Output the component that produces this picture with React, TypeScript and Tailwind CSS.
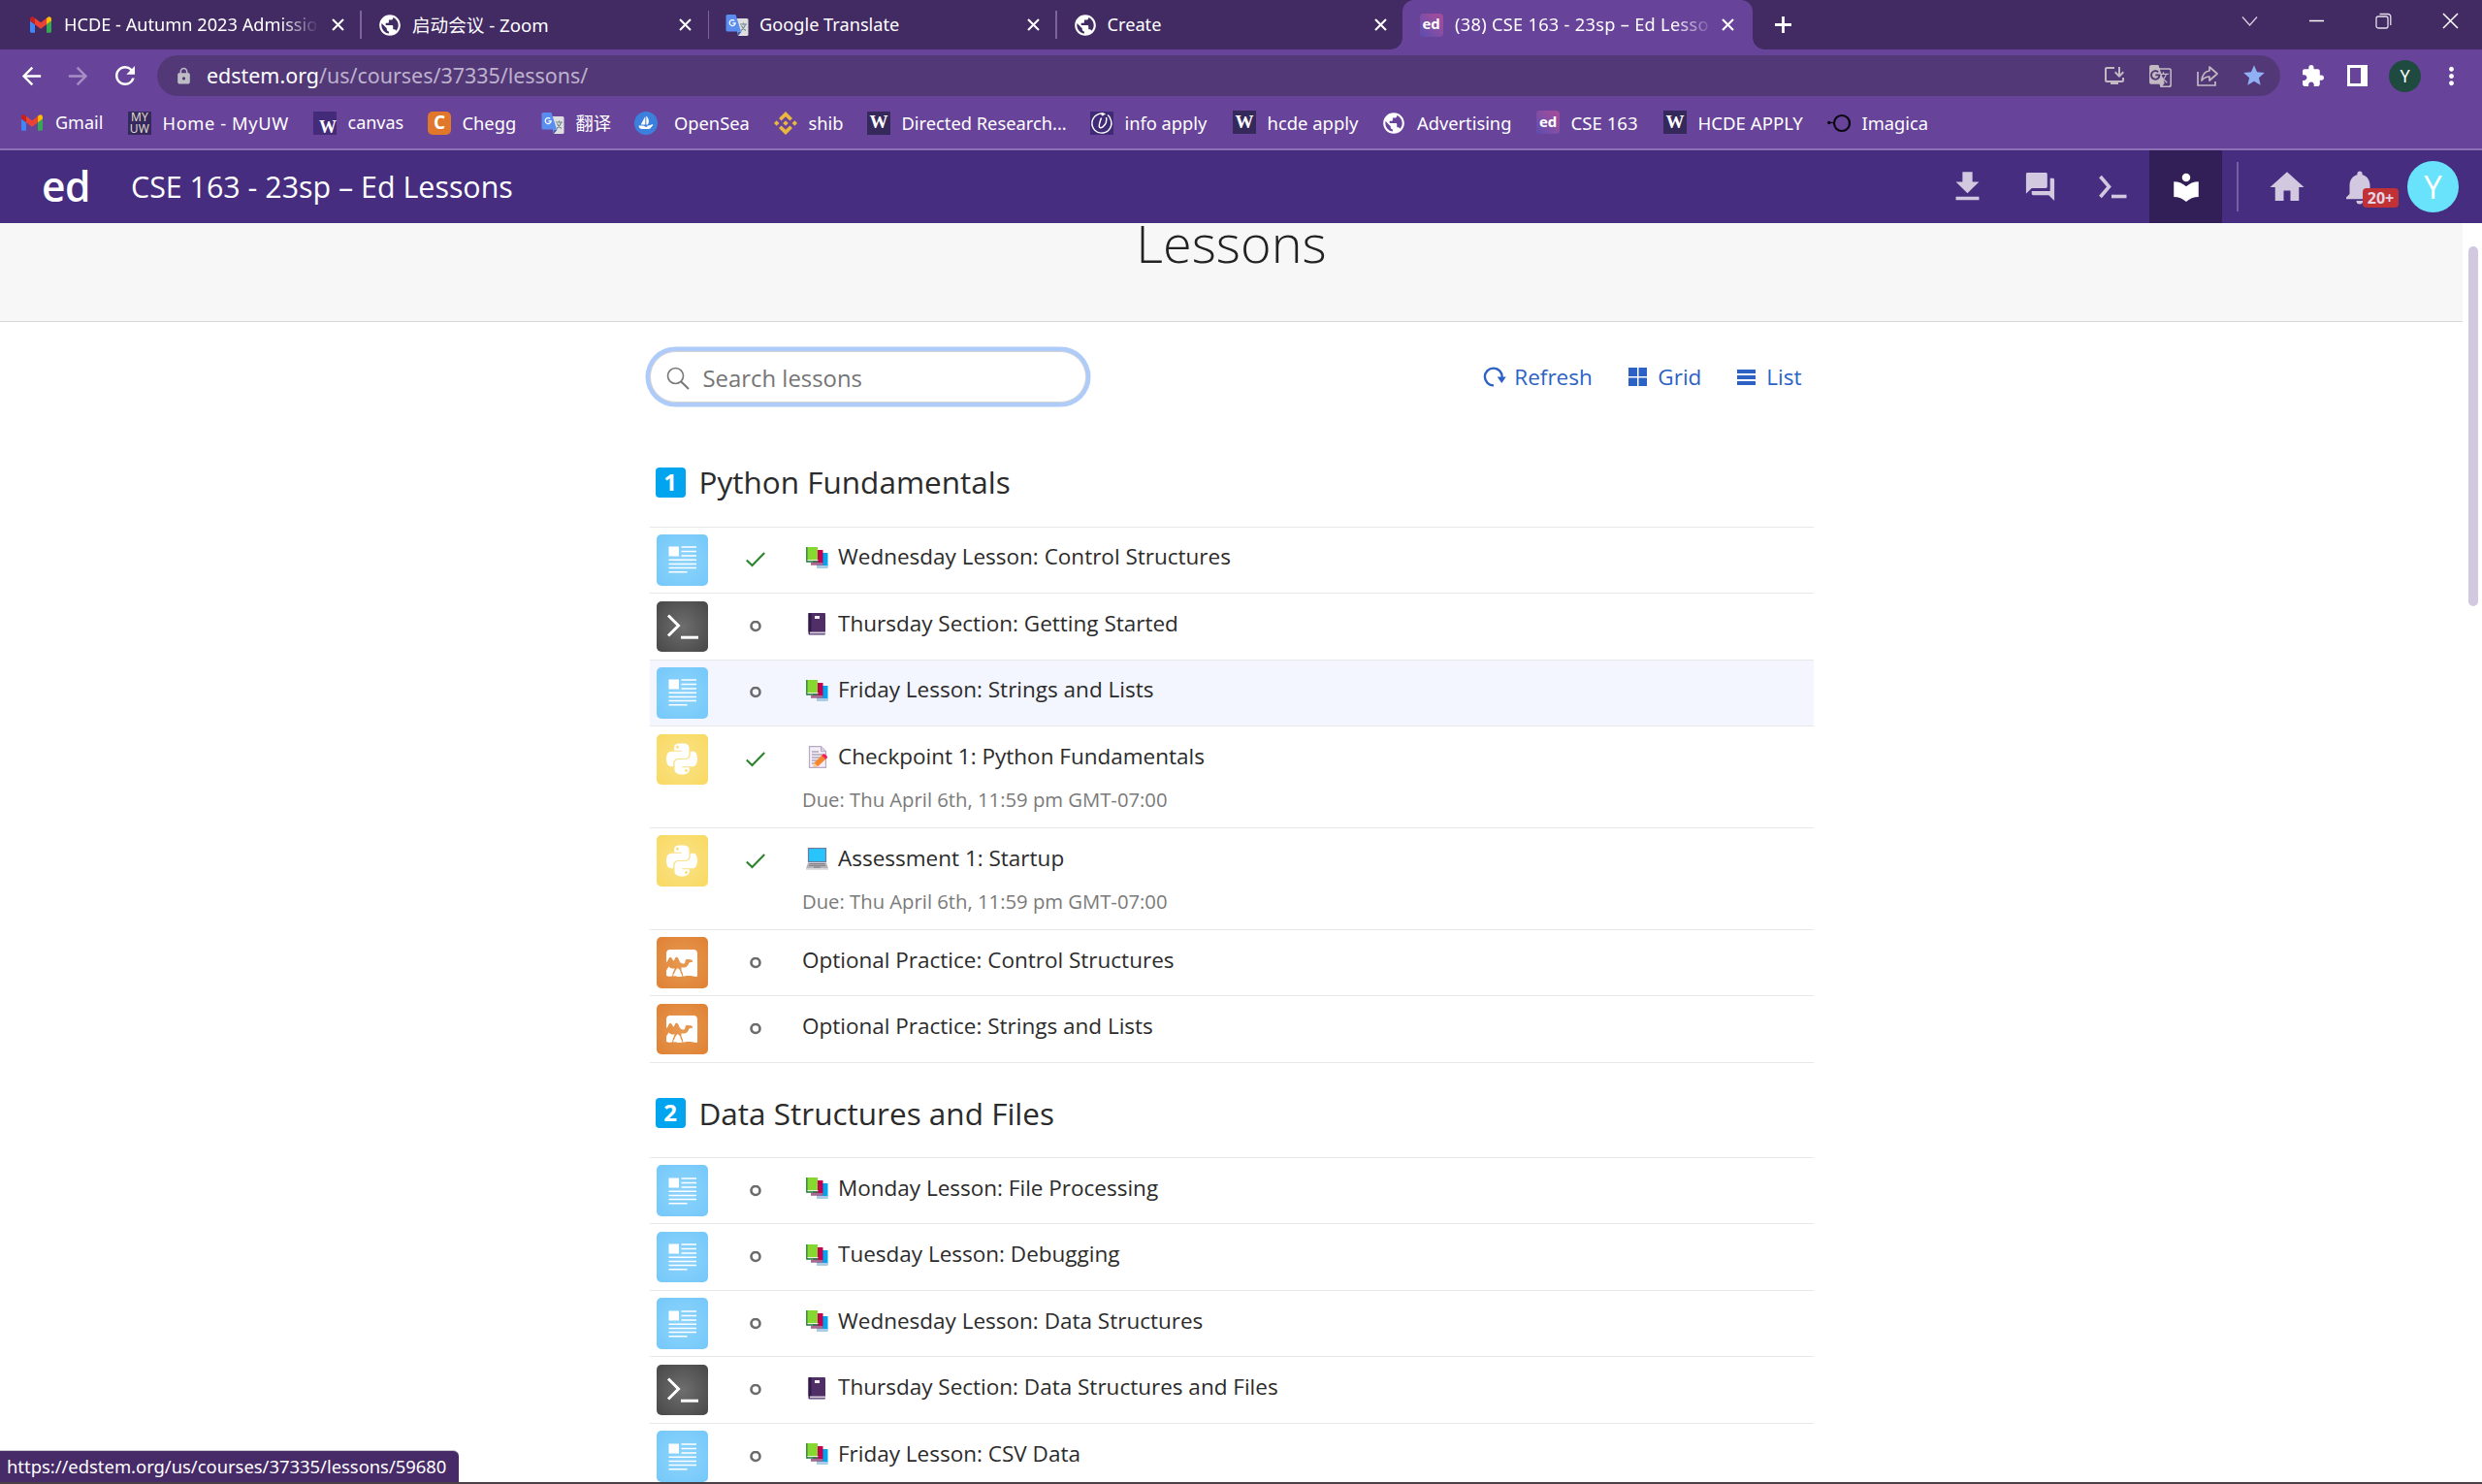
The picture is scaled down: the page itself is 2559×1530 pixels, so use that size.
import React, { type ReactNode } from "react";
import {
  MdArrowBack,
  MdArrowForward,
  MdExtension,
  MdFileDownload,
  MdForum,
  MdGTranslate,
  MdHome,
  MdInstallDesktop,
  MdLocalLibrary,
  MdLock,
  MdMoreVert,
  MdNotifications,
  MdPublic,
  MdRefresh,
  MdStar,
} from "react-icons/md";
import { FaPython } from "react-icons/fa";
import { SiOcaml } from "react-icons/si";

/* ---------- favicons ---------- */

const GmailIcon = () => (
  <svg className="h-[17px] w-[22px]" viewBox="52 42 88 66">
    <path fill="#4285f4" d="M58 108h14V74L52 59v43c0 3.32 2.69 6 6 6" />
    <path fill="#34a853" d="M120 108h14c3.32 0 6-2.69 6-6V59l-20 15" />
    <path fill="#fbbc04" d="M120 48v26l20-15v-8c0-7.42-8.47-11.65-14.4-7.2" />
    <path fill="#ea4335" d="M72 74V48l24 18 24-18v26L96 92" />
    <path fill="#c5221f" d="M52 51v8l20 15V48l-5.6-4.2c-5.94-4.45-14.4-.22-14.4 7.2" />
  </svg>
);

const GlobeIcon = () => <MdPublic className="-m-[2px] size-[26px] shrink-0 text-white" />;

const TranslateIcon = () => (
  <svg className="size-[24px]" viewBox="0 0 24 24">
    <path d="M10 5h12a1.500 1.500 0 0 1 1.500 1.500V21.500A1.500 1.500 0 0 1 22 23h-9z" fill="#dfdfdf" />
    <path d="M12.500 18.500h4.200L13 23z" fill="#3a62b8" />
    <path d="M2 1h8.500l5.500 17.500H2A1.500 1.500 0 0 1 .5 17V2.500A1.500 1.500 0 0 1 2 1z" fill="#5a8df0" />
    <path d="M15 11h7M18.500 9.500V11M20.500 11c-.5 3-2.500 5-4.500 6.500M16.500 12.500c1 2.500 2.500 4 4.500 5" stroke="#6f8590" strokeWidth="1.100" fill="none" />
    <path d="M9.300 7.400A3 3 0 1 0 10.200 9.800H7.400" stroke="#fff" strokeWidth="1.300" fill="none" />
  </svg>
);

const EdIcon = () => (
  <span className="flex size-[24px] items-center justify-center rounded-[4px] bg-linear-to-tr from-[#5b4cb0] to-[#ab4a98] pb-[2px] font-['Open_Sans'] text-[15px] font-bold leading-none tracking-[-0.3px] text-white">
    ed
  </span>
);

const WIcon = () => (
  <span className="flex size-[24px] items-center justify-center bg-[#35285a] pb-[2px] font-['Liberation_Serif'] text-[19px] font-bold leading-none text-white">
    W
  </span>
);

const MyUwIcon = () => (
  <span className="flex size-[24px] flex-col items-center justify-center bg-[#35285f] font-['Open_Sans'] text-[12px] leading-[12px] tracking-[0.3px] text-[#e8e0cc]">
    <span>MY</span>
    <span>UW</span>
  </span>
);

const CanvasIcon = () => (
  <span className="flex size-[24px] items-end justify-end bg-[#432b7a] font-['Liberation_Serif'] text-[18px] font-bold leading-[15px] text-white">
    W
  </span>
);

const CheggIcon = () => (
  <span className="flex size-[24px] items-center justify-center rounded-[5px] bg-[#e0772b] pb-px font-['Open_Sans'] text-[19px] font-bold leading-none text-white">
    C
  </span>
);

const OpenSeaIcon = () => (
  <svg className="size-[24px]" viewBox="0 0 24 24">
    <circle cx="12" cy="12" r="12" fill="#3b80dc" />
    <path d="M11.300 5v8.500H6.700z" fill="#fff" />
    <path d="M12.300 4.500c2.600 2.600 3.500 6 1.600 9h-1.600z" fill="#fff" />
    <path d="M4.500 14.500h5l2 1.300h1.800v-1.300h1.800l4-1.400v1.500c-1.500.6-2 3.400-4.400 3.400H8c-2 0-3.500-1.500-3.500-3.500z" fill="#fff" />
  </svg>
);

const BinanceIcon = () => (
  <svg className="size-[24px]" viewBox="0 0 24 24" fill="#eab83f">
    <path d="M12 0l7 7-2.600 2.600L12 5.200 7.600 9.600 5 7z" />
    <path d="M12 24l7-7-2.600-2.600-4.400 4.400-4.400-4.400L5 17z" />
    <path d="M12 9.200l2.800 2.800-2.800 2.800L9.200 12zM2.700 9.300L5.400 12l-2.700 2.700L0 12zM21.300 9.300L24 12l-2.700 2.700-2.700-2.700z" />
  </svg>
);

const InfoIcon = () => (
  <svg className="size-[24px]" viewBox="0 0 24 24" fill="none" stroke="#fff">
    <rect width="24" height="24" fill="#3f2a78" stroke="none" />
    <path d="M15.500 2.800A10 10 0 1 0 21 8c-.5-2-1.500-3.500-3-4.500" strokeWidth="1.400" />
    <path d="M11.500 6.500c-1.500 4-3 8-2 9.500 1.500 2 5.500-1 6.800-4.500.8-2.500.8-4 .2-5.500" strokeWidth="1.500" />
    <circle cx="12.800" cy="3" r="1.400" fill="#fff" stroke="none" />
  </svg>
);

const ImagicaIcon = () => (
  <svg className="size-[24px]" viewBox="0 0 24 24">
    <circle cx="15" cy="12" r="8" fill="none" stroke="#0b0710" strokeWidth="2.200" />
    <path d="M1 11.500h6" stroke="#0b0710" strokeWidth="1.200" />
    <circle cx="1.800" cy="11.500" r="1.700" fill="#0b0710" />
  </svg>
);

/* ---------- browser chrome ---------- */

const CloseX = () => (
  <svg className="size-[13px] shrink-0" viewBox="0 0 13 13" stroke="#fff" strokeWidth="2.100">
    <path d="M1 1l11 11M12 1L1 12" />
  </svg>
);

function TabStrip() {
  return (
    <div className="flex h-[51px] w-full items-center bg-[#422a63] text-[18.200px] text-white">
      <div className="flex h-full w-[371px] items-center pl-[31px]">
        <GmailIcon />
        <span className="ml-[13px] w-[266px] overflow-hidden whitespace-nowrap mask-r-from-84% mask-r-to-99%">
          HCDE - Autumn 2023 Admissio
        </span>
        <span className="ml-[9.500px] flex">
          <CloseX />
        </span>
      </div>
      <span className="h-[29px] w-[1.500px] bg-[#7d659c]" />
      <div className="flex h-full w-[357px] items-center pl-[18px]">
        <GlobeIcon />
        <span className="ml-[12.500px] w-[274.500px] whitespace-nowrap text-[18.600px]">启动会议 - Zoom</span>
        <CloseX />
      </div>
      <span className="h-[29px] w-[1.500px] bg-[#7d659c]" />
      <div className="flex h-full w-[357px] items-center pl-[16.500px]">
        <TranslateIcon />
        <span className="ml-[11.500px] w-[275.500px] whitespace-nowrap">Google Translate</span>
        <CloseX />
      </div>
      <span className="h-[29px] w-[1.500px] bg-[#7d659c]" />
      <div className="flex h-full w-[356px] items-center pl-[18px]">
        <GlobeIcon />
        <span className="ml-[12px] w-[275.500px] whitespace-nowrap">Create</span>
        <CloseX />
      </div>
      <div className="relative flex h-full w-[361px] items-center rounded-t-[12px] bg-[#68439a] pl-[18px]">
        <span className="absolute bottom-0 -left-[12px] size-[12px] bg-[radial-gradient(circle_at_0_0,#422a63_11.500px,#68439a_12px)]" />
        <span className="absolute bottom-0 -right-[12px] size-[12px] bg-[radial-gradient(circle_at_100%_0,#422a63_11.500px,#68439a_12px)]" />
        <EdIcon />
        <span className="ml-[12.500px] w-[262px] overflow-hidden whitespace-nowrap tracking-[0.300px] mask-r-from-86% mask-r-to-102%">
          (38) CSE 163 - 23sp – Ed Lesso
        </span>
        <span className="ml-[13px] flex">
          <CloseX />
        </span>
      </div>
      <svg className="ml-[22px] size-[19px]" viewBox="0 0 19 19" stroke="#fff" strokeWidth="2.800">
        <path d="M9.500 1v17M1 9.500h17" />
      </svg>
      <div className="ml-auto flex h-full items-start gap-[52px] pt-[13px] pr-[24px]">
        <svg className="size-[17px]" viewBox="0 0 17 17" fill="none" stroke="#d9d0e2" strokeWidth="1.300">
          <path d="M1 4.500l7.500 8.500L16 4.500" />
        </svg>
        <svg className="size-[17px]" viewBox="0 0 17 17" stroke="#fff" strokeWidth="1.500">
          <path d="M1 8.500h15" />
        </svg>
        <svg className="size-[17px]" viewBox="0 0 17 17" fill="none" stroke="#e6dfec" strokeWidth="1.300">
          <rect x="1" y="4" width="12" height="12" rx="2" />
          <path d="M4.500 1.500H13a2.800 2.800 0 0 1 2.800 2.800V13" />
        </svg>
        <svg className="size-[17px]" viewBox="0 0 17 17" stroke="#fff" strokeWidth="1.500">
          <path d="M1 1l15 15M16 1L1 16" />
        </svg>
      </div>
    </div>
  );
}

function AddressRow() {
  return (
    <div className="flex h-[54px] items-center pr-[17px] pl-[18px] text-white">
      <MdArrowBack className="size-[29px]" />
      <MdArrowForward className="ml-[19px] size-[29px] text-[#a78fc6]" />
      <MdRefresh className="ml-[19px] size-[30px]" />
      <div className="ml-[18px] flex h-[42px] w-[2189px] items-center rounded-full bg-[#533878] pr-[14px] pl-[17.500px]">
        <MdLock className="size-[19px] text-[#bdbdc4]" />
        <span className="ml-[14.500px] text-[21.450px] text-[#bdb1cd]">
          <span className="text-white">edstem.org</span>/us/courses/37335/lessons/
        </span>
        <div className="ml-auto flex items-center gap-[23.500px] text-[#c2b9c3]">
          <MdInstallDesktop className="size-[24px]" />
          <MdGTranslate className="size-[25px]" />
          <svg className="size-[24px]" viewBox="0 0 24 24" fill="none" stroke="currentColor" strokeWidth="1.700">
            <path d="M2 8v14h18v-4" />
            <path d="M14 3l8 7-8 7v-4c-4 0-6 1.500-8 4 .5-5 3-9.500 8-10z" strokeLinejoin="round" />
          </svg>
          <MdStar className="size-[26px] text-[#8fb0f5]" />
        </div>
      </div>
      <div className="ml-auto flex items-center">
        <MdExtension className="size-[25px]" />
        <span className="ml-[23px] flex h-[22px] w-[21px] border-y-[3px] border-r-[7px] border-l-[3px] border-white" />
        <span className="ml-[22px] flex size-[33px] items-center justify-center rounded-full bg-[#1f4a40] text-[18px] leading-none">Y</span>
        <MdMoreVert className="ml-[17px] size-[29px]" />
      </div>
    </div>
  );
}

type BookmarkProps = { w: string; gap?: string; icon: ReactNode; text?: string; children: ReactNode };

function Bookmark({ w, gap = "ml-[11.500px]", icon, text = "", children }: BookmarkProps) {
  return (
    <div className={`flex shrink-0 items-center whitespace-nowrap ${w}`}>
      {icon}
      <span className={`${gap} ${text}`}>{children}</span>
    </div>
  );
}

function BookmarksBar() {
  return (
    <div className="flex h-[48px] items-center pb-[5px] pl-[22px] text-[18.300px] text-white">
      <Bookmark w="w-[110px]" gap="ml-[13px]" text="text-[18px]" icon={<GmailIcon />}>Gmail</Bookmark>
      <Bookmark w="w-[191px]" text="tracking-[0.600px]" icon={<MyUwIcon />}>Home - MyUW</Bookmark>
      <Bookmark w="w-[118px]" text="text-[18px]" icon={<CanvasIcon />}>canvas</Bookmark>
      <Bookmark w="w-[117px]" icon={<CheggIcon />}>Chegg</Bookmark>
      <Bookmark w="w-[96px]" icon={<TranslateIcon />}>翻译</Bookmark>
      <Bookmark w="w-[144px]" gap="ml-[17px]" icon={<OpenSeaIcon />}>OpenSea</Bookmark>
      <Bookmark w="w-[96px]" icon={<BinanceIcon />}>shib</Bookmark>
      <Bookmark w="w-[230px]" icon={<WIcon />}>Directed Research...</Bookmark>
      <Bookmark w="w-[147px]" icon={<InfoIcon />}>info apply</Bookmark>
      <Bookmark w="w-[155px]" text="text-[18.450px]" icon={<WIcon />}>hcde apply</Bookmark>
      <Bookmark w="w-[158px]" gap="ml-[13px]" icon={<GlobeIcon />}>Advertising</Bookmark>
      <Bookmark w="w-[131px]" text="text-[18.600px]" icon={<EdIcon />}>CSE 163</Bookmark>
      <Bookmark w="w-[169px]" text="text-[18.600px]" icon={<WIcon />}>HCDE APPLY</Bookmark>
      <Bookmark w="w-[130px]" icon={<ImagicaIcon />}>Imagica</Bookmark>
    </div>
  );
}

/* ---------- application header ---------- */

const HeaderCell = ({ children, active = false }: { children: ReactNode; active?: boolean }) => (
  <div className={`flex h-full w-[75px] items-center justify-center ${active ? "bg-[#331f58] text-white" : "text-[#d2c9e0]"}`}>
    {children}
  </div>
);

function AppHeader() {
  return (
    <header className="flex h-[75px] items-center bg-[#462d7f] pl-[43px] font-['Open_Sans'] text-white">
      <span className="w-[92px] text-[42.500px] leading-none font-semibold tracking-[-0.400px]">ed</span>
      <span className="text-[30.400px]">CSE 163 - 23sp – Ed Lessons</span>
      <div className="ml-auto flex h-full items-center">
        <HeaderCell>
          <MdFileDownload className="size-[41px]" />
        </HeaderCell>
        <HeaderCell>
          <MdForum className="size-[35px]" />
        </HeaderCell>
        <HeaderCell>
          <svg className="h-[26px] w-[29px]" viewBox="0 0 29 26" fill="none" stroke="currentColor" strokeWidth="3.600">
            <path d="M1.500 2l9 10.500-9 10.500" />
            <path d="M13 22.500h15.500" />
          </svg>
        </HeaderCell>
        <HeaderCell active>
          <MdLocalLibrary className="size-[34px]" />
        </HeaderCell>
        <span className="ml-[15px] h-[51px] w-[2px] bg-[#76619f]" />
        <MdHome className="ml-[29px] size-[42px] text-[#d2c9e0]" />
        <div className="relative ml-[33px] flex">
          <MdNotifications className="size-[42px] text-[#d2c9e0]" />
          <span className="absolute top-[22px] left-[24px] flex h-[20px] w-[37px] items-center justify-center rounded-[4px] bg-[#c13237] text-[16px] leading-none font-bold text-[#e5d6e3]">
            20+
          </span>
        </div>
        <span className="mr-[24px] ml-[28px] flex size-[53px] items-center justify-center rounded-full bg-[#69e3fc] text-[33px] leading-none">Y</span>
      </div>
    </header>
  );
}

/* ---------- lesson list ---------- */

type Kind = "doc" | "term" | "python" | "ocaml";
type Emoji = "books" | "notebook" | "memo" | "laptop";
type Lesson = { kind: Kind; done?: boolean; emoji?: Emoji; title: string; due?: string; hover?: boolean };

const tileStyle: Record<Kind, string> = {
  doc: "bg-[radial-gradient(circle,#8dd4fb,#74c8fa)]",
  term: "bg-[radial-gradient(circle,#6e6e6e,#474747)]",
  python: "bg-[radial-gradient(circle,#fae389,#f9d962)]",
  ocaml: "bg-[radial-gradient(circle,#e79a51,#df8134)]",
};

function Tile({ kind }: { kind: Kind }) {
  return (
    <span className={`flex size-[52.500px] shrink-0 items-center justify-center rounded-[5px] text-white ${tileStyle[kind]}`}>
      {kind === "doc" && (
        <svg className="size-[52px]" viewBox="0 0 52 52" stroke="#fff" strokeWidth="1.500">
          <rect x="12.500" y="12.500" width="10.500" height="10" fill="#fff" stroke="none" />
          <path d="M25.500 13h15.500M25.500 17.500h15.500M25.500 22h15.500M12.500 26.200h28.500M12.500 30.400h28.500M12.500 34.600h28.500M12.500 38.800h19" />
        </svg>
      )}
      {kind === "term" && (
        <svg className="size-[52px]" viewBox="0 0 52 52" fill="none" stroke="#fff" strokeWidth="3">
          <path d="M12 14.500l10.500 10.500-10.500 10.500" />
          <path d="M25 37.200h18" />
        </svg>
      )}
      {kind === "python" && <FaPython className="h-[37px] w-[32px]" />}
      {kind === "ocaml" && <SiOcaml className="size-[32px]" />}
    </span>
  );
}

function EmojiIcon({ name }: { name: Emoji }) {
  return (
    <svg className="mt-[2px] mr-[10px] ml-[4px] size-[23px] shrink-0" viewBox="0 0 23 23">
      {name === "books" && (
        <>
          <path d="M11 6h11.500v14.500H11z" fill="#00a4ef" />
          <path d="M11 19h11.500v3H11z" fill="#a9cbe4" />
          <path d="M7 3h10.500v15H7z" fill="#c30052" />
          <path d="M5 16h12.500v2.800H5z" fill="#a86a92" />
          <path d="M0 0h12v14.500H0z" fill="#86d72f" />
          <path d="M0 0h1.600v15.800H0z" fill="#3f8f4a" />
          <path d="M1.600 13h10.800v1.200H1.600z" fill="#e9f5e2" />
          <path d="M1 14.200h11.400v1.600H1z" fill="#2e7d4f" />
        </>
      )}
      {name === "notebook" && (
        <>
          <rect x="2.500" y="0" width="17.500" height="22.500" rx="1" fill="#4f2f66" />
          <path d="M2.500 0h3v19.500h-3z" fill="#33184a" />
          <path d="M4 19.500h16v1.800H4z" fill="#d6cfdd" />
          <path d="M9 3h5v3H9z" fill="#f5f0f8" />
        </>
      )}
      {name === "memo" && (
        <>
          <path d="M3.500.7h12l5 5v16.600h-17z" fill="#f3eef8" stroke="#b7abc4" strokeWidth="1.200" />
          <path d="M15.500.7v5h5" fill="#d9d0e3" stroke="#b7abc4" strokeWidth="1" />
          <path d="M6 6h7M6 9h11.500M6 12h9M6 15h6M6 18h3" stroke="#8d8299" strokeWidth="1" />
          <path d="M8.500 17.500l8-8 4 4-8 7.500-5 .8z" fill="#f7862c" />
          <path d="M8.500 17.500l3.500 3.500-4.500 1z" fill="#f9c99a" />
          <path d="M17.500 8.500c1.500-1.200 5 1.800 4.500 3.700l-1.800 1.500-4-3.700z" fill="#f0235f" />
        </>
      )}
      {name === "laptop" && (
        <>
          <rect x="2.500" y=".5" width="18" height="14" fill="#27c5fb" stroke="#6d7ca0" strokeWidth="1.200" />
          <path d="M2 15.500h19l2 6H0z" fill="#b5b3b8" />
          <path d="M3.500 16.500h16M3 18.300h17" stroke="#77757c" strokeWidth=".9" />
          <path d="M8 19.500h7v1.200H8z" fill="#85838a" />
          <path d="M0 21.200h23v1.600H0z" fill="#d9d8db" />
        </>
      )}
    </svg>
  );
}

function LessonRow({ lesson }: { lesson: Lesson }) {
  return (
    <div className={`flex items-start border-t border-[#e8e8e8] py-[7.500px] pl-[7.500px] ${lesson.hover ? "bg-[#f3f6fe]" : ""}`}>
      <Tile kind={lesson.kind} />
      <span className="ml-[38px] flex h-[52.500px] w-[23px] items-center justify-center">
        {lesson.done ? (
          <svg className="h-[16px] w-[20px]" viewBox="0 0 20 16" fill="none" stroke="#2e842e" strokeWidth="2.100">
            <path d="M.8 8.500l5.700 5.500L19.200 1" />
          </svg>
        ) : (
          <svg className="size-[12px]" viewBox="0 0 12 12" fill="none" stroke="#6b6b6b" strokeWidth="2.600">
            <circle cx="6" cy="5.500" r="4.500" />
          </svg>
        )}
      </span>
      <div className="ml-[36.500px]">
        <div className="flex h-[45.600px] items-center pt-px text-[22.500px] text-[#2b2b2b]">
          {lesson.emoji && <EmojiIcon name={lesson.emoji} />}
          {lesson.title}
        </div>
        {lesson.due && <div className="flex h-[43.400px] items-center text-[20.250px] text-[#7a7a7a]">{lesson.due}</div>}
      </div>
    </div>
  );
}

function Section({ num, title, lessons }: { num: number; title: string; lessons: Lesson[] }) {
  return (
    <section>
      <div className="flex h-[97px] items-center pt-[6px] pl-[6px]">
        <span className="mt-px flex size-[31px] items-center justify-center rounded-[4px] bg-[#00a4ef] pb-px text-[24px] leading-none font-bold text-white">{num}</span>
        <h2 className="ml-[12px] pl-[2px] text-[31.500px] text-[#2b2b2b]">{title}</h2>
      </div>
      <div className="border-b border-[#e8e8e8]">
        {lessons.map((l) => (
          <LessonRow key={l.title} lesson={l} />
        ))}
      </div>
    </section>
  );
}

const DUE = "Due: Thu April 6th, 11:59 pm GMT-07:00";

const fundamentals: Lesson[] = [
  { kind: "doc", done: true, emoji: "books", title: "Wednesday Lesson: Control Structures" },
  { kind: "term", emoji: "notebook", title: "Thursday Section: Getting Started" },
  { kind: "doc", emoji: "books", title: "Friday Lesson: Strings and Lists", hover: true },
  { kind: "python", done: true, emoji: "memo", title: "Checkpoint 1: Python Fundamentals", due: DUE },
  { kind: "python", done: true, emoji: "laptop", title: "Assessment 1: Startup", due: DUE },
  { kind: "ocaml", title: "Optional Practice: Control Structures" },
  { kind: "ocaml", title: "Optional Practice: Strings and Lists" },
];

const dataStructures: Lesson[] = [
  { kind: "doc", emoji: "books", title: "Monday Lesson: File Processing" },
  { kind: "doc", emoji: "books", title: "Tuesday Lesson: Debugging" },
  { kind: "doc", emoji: "books", title: "Wednesday Lesson: Data Structures" },
  { kind: "term", emoji: "notebook", title: "Thursday Section: Data Structures and Files" },
  { kind: "doc", emoji: "books", title: "Friday Lesson: CSV Data" },
];

function Toolbar() {
  return (
    <div className="flex items-center pt-[29.500px]">
      <div className="flex h-[53.500px] w-[450px] items-center rounded-full border border-[#d4d4d4] bg-white pl-[16px] text-[23.900px] text-[#757575] ring-[4.500px] ring-[#aecbfa]">
        <svg className="mt-[3px] size-[24px]" viewBox="0 0 24 24" fill="none" stroke="#777" strokeWidth="1.600">
          <circle cx="9.500" cy="9.500" r="8" />
          <path d="M15 15.300l8 7.700" strokeWidth="2" />
        </svg>
        <span className="ml-[14px] pt-[3px]">Search lessons</span>
      </div>
      <div className="ml-auto flex items-center pr-[12px] text-[22.500px] text-[#2b62c4]">
        <svg className="h-[21px] w-[24px]" viewBox="0 0 24 21" fill="none" stroke="currentColor" strokeWidth="2.400">
          <path d="M11 19.400a8.900 8.900 0 1 1 8.700-8.500" />
          <path d="M14.700 10.500h9.100l-4.500 6.500z" fill="currentColor" stroke="none" />
        </svg>
        <span className="ml-[8px] w-[118px] pt-px">Refresh</span>
        <svg className="size-[19px]" viewBox="0 0 19 19" fill="currentColor">
          <path d="M0 0h9v9H0zM10.500 0H19v9h-8.500zM0 10.500h9V19H0zM10.500 10.500H19V19h-8.500z" />
        </svg>
        <span className="ml-[11px] w-[82px] pt-px">Grid</span>
        <svg className="h-[17px] w-[19px]" viewBox="0 0 19 17" fill="currentColor">
          <path d="M0 1h19v4H0zM0 7h19v4H0zM0 13h19v4H0z" />
        </svg>
        <span className="ml-[11px] pt-px">List</span>
      </div>
    </div>
  );
}

export default function App() {
  return (
    <div className="relative flex h-[1530px] w-[2559px] flex-col overflow-hidden bg-white font-['Open_Sans','Noto_Sans_CJK_SC',sans-serif]">
      <div className="shrink-0 border-b-2 border-[#8d6fb5] bg-[#68439a] font-['Noto_Sans','Noto_Sans_CJK_SC',sans-serif]">
        <TabStrip />
        <AddressRow />
        <BookmarksBar />
      </div>
      <AppHeader />
      <div className="flex min-h-0 flex-1 border-b-2 border-[#4a4046]">
        <main className="w-[2539px] overflow-hidden">
          <div className="h-[103px] border-b border-[#d9d9d9] bg-[#f7f7f7]">
            <h1 className="-mt-px text-center text-[54px] leading-[42px] font-light text-[#222]">Lessons</h1>
          </div>
          <div className="mx-auto w-[1200px]">
            <Toolbar />
            <div className="pt-[30.500px]">
              <Section num={1} title="Python Fundamentals" lessons={fundamentals} />
              <Section num={2} title="Data Structures and Files" lessons={dataStructures} />
            </div>
          </div>
        </main>
        <div className="flex w-[20px] justify-center pt-[24px]">
          <span className="ml-[2px] h-[371px] w-[10px] rounded-full bg-[#d1c9e0]" />
        </div>
      </div>
      <div className="absolute bottom-[2px] left-0 flex h-[33px] w-[473px] items-center rounded-tr-[6px] border-t border-[#c9c5cf] bg-[#472a68] pl-[7px] font-['Noto_Sans',sans-serif] text-[18.400px] text-white">
        https://edstem.org/us/courses/37335/lessons/59680
      </div>
    </div>
  );
}
